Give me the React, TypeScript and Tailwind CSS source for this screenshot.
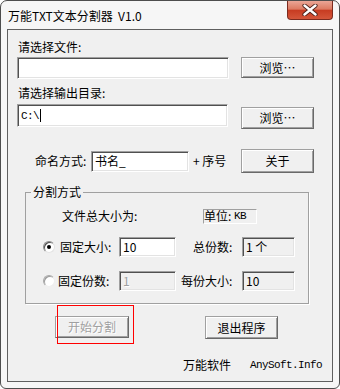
import type { ReactNode } from "react";

const FONT = "font-['Noto_Sans_CJK_SC',sans-serif]";
const MONO = "font-['Liberation_Mono','Noto_Sans_CJK_SC',monospace]";

const raised =
  "border border-t-[#a0a0a0] border-l-[#a0a0a0] border-r-[#696969] border-b-[#696969] shadow-[inset_1px_1px_0_#ffffff,inset_-1px_-1px_0_#a0a0a0] bg-[#f0f0f0]";
const sunken =
  "border border-t-[#a0a0a0] border-l-[#a0a0a0] border-r-white border-b-white shadow-[inset_1px_1px_0_#505050,inset_-1px_-1px_0_#e3e3e3]";

const Btn = ({
  children,
  className = "",
  disabled = false,
}: {
  children: ReactNode;
  className?: string;
  disabled?: boolean;
}) => (
  <button
    type="button"
    className={`${raised} shrink-0 flex items-center justify-center leading-[14px] text-[12px] whitespace-nowrap ${
      disabled ? "text-[#a0a0a0] [text-shadow:1px_1px_0_#ffffff]" : "text-black"
    } ${className}`}
  >
    {children}
  </button>
);

const Field = ({
  value = "",
  className = "",
  readOnly = false,
  disabled = false,
  mono = false,
  caret = false,
}: {
  value?: string;
  className?: string;
  readOnly?: boolean;
  disabled?: boolean;
  mono?: boolean;
  caret?: boolean;
}) => (
  <div
    className={`${sunken} shrink-0 flex items-center pl-[3px] leading-[14px] ${
      readOnly || disabled ? "bg-[#f0f0f0]" : "bg-white"
    } ${disabled ? "text-[#a0a0a0] [text-shadow:1px_1px_0_#ffffff]" : "text-black"} ${
      mono ? `${MONO} text-[11px] tracking-[-0.6px]` : "text-[12px]"
    } ${className}`}
  >
    <span className="whitespace-pre">{value}</span>
    {caret && <span className="ml-[1px] w-[1px] h-[13px] bg-black" />}
  </div>
);

const Label = ({ children, className = "" }: { children: ReactNode; className?: string }) => (
  <span className={`shrink-0 whitespace-pre leading-[16px] ${className}`}>{children}</span>
);

const Radio = ({ checked = false }: { checked?: boolean }) => (
  <span
    className={`w-[12px] h-[12px] shrink-0 rounded-full border flex items-center justify-center ${
      checked
        ? "border-t-[#8a8a8a] border-l-[#8a8a8a] border-r-[#e3e3e3] border-b-[#e3e3e3] shadow-[inset_1px_1px_0_#505050] bg-white"
        : "border-t-[#a8a8a8] border-l-[#a8a8a8] border-r-[#eeeeee] border-b-[#eeeeee] shadow-[inset_1px_1px_0_#9a9a9a] bg-white"
    }`}
  >
    {checked && <span className="w-[4px] h-[4px] rounded-full bg-black" />}
  </span>
);

const CloseButton = () => (
  <div className="w-[46px] h-[19px] shrink-0 rounded-b-[4px] border border-t-0 border-[#7b2b1f] bg-[linear-gradient(#eaa696,#dc7a62_45%,#c73c22_52%,#d4563a)] flex items-center justify-center">
    <svg width="16" height="12" viewBox="0 0 16 12">
      <path d="M2.5 1.5 L13.5 10.5 M13.5 1.5 L2.5 10.5" stroke="#4a1f18" strokeWidth="4.2" strokeLinecap="round" />
      <path d="M2.5 1.5 L13.5 10.5 M13.5 1.5 L2.5 10.5" stroke="#ffffff" strokeWidth="2.4" strokeLinecap="round" />
    </svg>
  </div>
);

const App = () => {
  return (
    <div className={`w-[340px] h-[389px] bg-white ${FONT} text-[12px] text-black`}>
      <div className="h-full flex flex-col border border-[#4d4d4d] rounded-t-[7px] rounded-b-[6px] bg-[#f6f6f6] px-[6px] pb-[6px]">
        {/* Title bar */}
        <div className="h-[28px] shrink-0 flex items-start justify-between">
          <span className="mt-[7px] ml-[1px] leading-[16px] whitespace-pre">万能TXT文本分割器  V1.0</span>
          <CloseButton />
        </div>

        {/* Client area */}
        <div className="flex-1 border border-[#5f5f5f] bg-[#f0f0f0] pl-[9px] pt-[9px]">
          <div className="pl-[1px] leading-[16px]">请选择文件:</div>
          <div className="mt-[2px] flex items-start">
            <Field className="w-[212px] h-[22px]" />
            <Btn className="ml-[12px] w-[73px] h-[21px]">浏览⋯</Btn>
          </div>

          <div className="mt-[6px] pl-[1px] leading-[16px]">请选择输出目录:</div>
          <div className="mt-[3px] flex items-start">
            <Field className="w-[211px] h-[23px]" value="C:\" mono caret />
            <Btn className="ml-[13px] mt-[3px] w-[73px] h-[22px]">浏览⋯</Btn>
          </div>

          <div className="mt-[20px] h-[24px] flex items-center">
            <Label className="ml-[18px] w-[56px]">命名方式:</Label>
            <Field className="w-[98px] h-[21px]" value="书名_" />
            <Label className="w-[52px] pl-[4px]">+ 序号</Label>
            <Btn className="w-[73px] h-[24px]">关于</Btn>
          </div>

          {/* Split mode group */}
          <fieldset className="mt-[11px] ml-[8px] w-[284px] border border-[#a0a0a0] shadow-[1px_1px_0_#ffffff] pb-[12px]">
            <legend className="ml-[5px] px-[2px] leading-[16px]">分割方式</legend>

            <div className="mt-[8px] h-[16px] flex items-center">
              <Label className="ml-[36px] w-[141px]">文件总大小为:</Label>
              <span className="shrink-0 w-[54px] h-[15px] border border-l-[#a0a0a0] border-t-[#a0a0a0] border-r-white border-b-white flex items-center leading-[14px] whitespace-pre">
                单位: <span className={`${MONO} text-[11px] tracking-[-0.6px]`}>KB</span>
              </span>
            </div>

            <div className="mt-[13px] h-[20px] flex items-center">
              <span className="ml-[17px] shrink-0">
                <Radio checked />
              </span>
              <Label className="ml-[5px] w-[59px]">固定大小:</Label>
              <Field className="w-[57px] h-[20px]" value="10" />
              <Label className="ml-[17px] w-[49px]">总份数:</Label>
              <Field className="w-[53px] h-[20px]" value="1 个" readOnly />
            </div>

            <div className="mt-[14px] h-[20px] flex items-center">
              <span className="ml-[17px] shrink-0">
                <Radio />
              </span>
              <Label className="ml-[3px] w-[61px]">固定份数:</Label>
              <Field className="w-[57px] h-[20px]" value="1" disabled />
              <Label className="ml-[5px] w-[61px]">每份大小:</Label>
              <Field className="w-[53px] h-[20px]" value="10" readOnly />
            </div>
          </fieldset>

          <div className="mt-[12px] flex items-start">
            <div className="relative ml-[38px] shrink-0">
              <Btn disabled className="w-[74px] h-[22px]">开始分割</Btn>
              {/* highlight frame drawn over the start button */}
              <svg
                className="absolute left-[2px] top-[-11px] pointer-events-none"
                width="77"
                height="39"
                viewBox="0 0 77 39"
              >
                <rect x="0.5" y="0.5" width="76" height="38" fill="none" stroke="#ff0000" strokeWidth="1" />
              </svg>
            </div>
            <Btn className="ml-[76px] w-[73px] h-[23px]">退出程序</Btn>
          </div>

          <div className="mt-[18px] flex items-center leading-[16px]">
            <Label className="ml-[166px]">万能软件</Label>
            <Label className={`ml-[19px] ${MONO} text-[11px] tracking-[-0.6px]`}>AnySoft.Info</Label>
          </div>
        </div>
      </div>
    </div>
  );
};

export default App;
